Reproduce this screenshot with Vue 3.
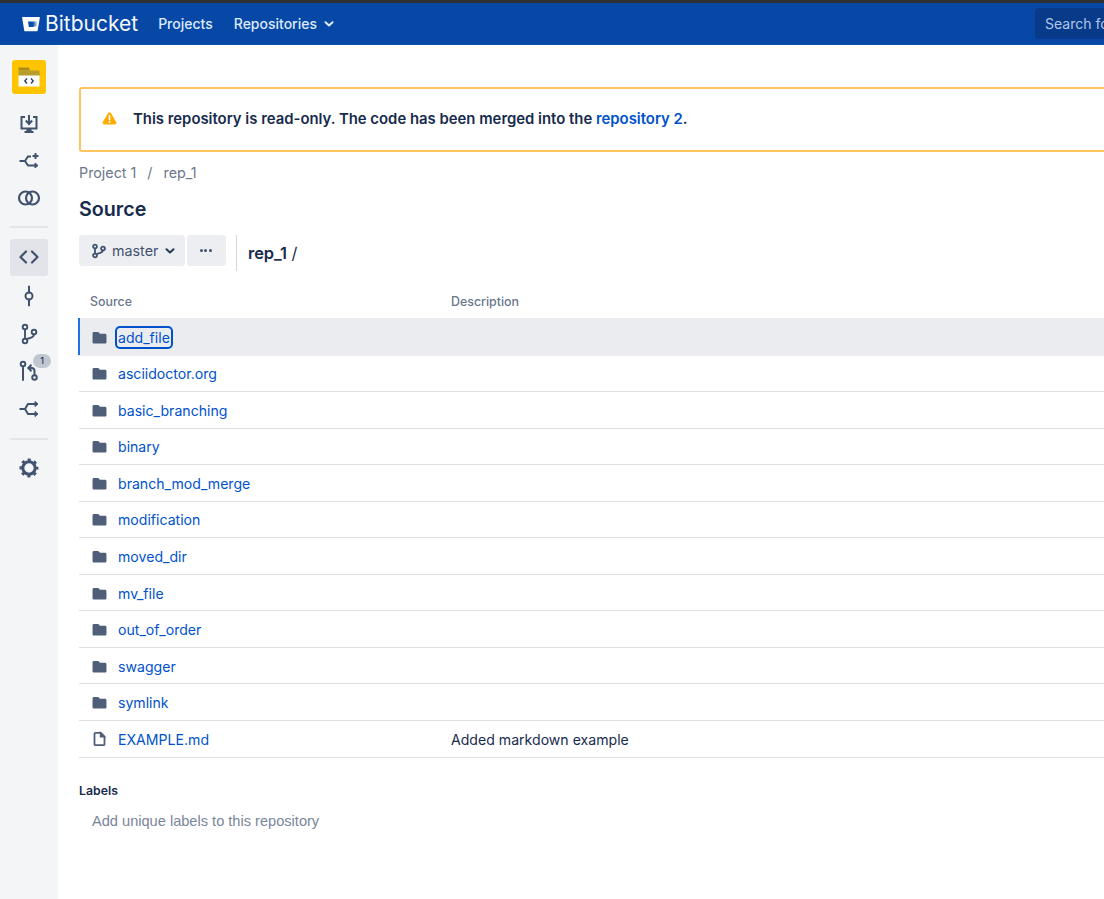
<script setup>
const folders = ['add_file','asciidoctor.org','basic_branching','binary','branch_mod_merge','modification','moved_dir','mv_file','out_of_order','swagger','symlink']
</script>

<template>
  <div class="page">
    <header class="nav">
      <svg class="logo" viewBox="0 0 18 16" width="18" height="16">
        <defs>
          <linearGradient id="bbgrad" x1="0" y1="0" x2="1" y2="0">
            <stop offset="0" stop-color="#0747a6"/>
            <stop offset="0.5" stop-color="#0f50ad"/>
            <stop offset="1" stop-color="#fff"/>
          </linearGradient>
        </defs>
        <path fill="#fff" d="M.6 1h16.800c.3 0 .6.3.5.6l-2.300 13.200c0 .3-.3.5-.6.5H3.100c-.4 0-.7-.3-.8-.6L.1 1.600C0 1.300.3 1 .6 1z"/>
        <path fill="url(#bbgrad)" d="M6 5.500h10L15.200 10.500H11.800L11.400 11H6.900z"/>
      </svg>
      <span class="brand">Bitbucket</span>
      <a class="nav-link projects">Projects</a>
      <a class="nav-link">Repositories</a>
      <svg class="nav-caret" viewBox="0 0 10 6" width="10" height="6"><path d="M1.500 1.200 5 4.500l3.500-3.300" fill="none" stroke="#deebff" stroke-width="2" stroke-linecap="round" stroke-linejoin="round"/></svg>
      <div class="spacer"></div>
      <div class="search">Search for code</div>
    </header>

    <div class="body">
      <aside class="side">
        <div class="repo-avatar">
          <svg viewBox="0 0 34 34" width="34" height="34">
            <path fill="#a98c1e" d="M6.500 7.500h10l2 3h-12z"/>
            <rect x="6.500" y="10.500" width="21" height="5.500" fill="#b89c2c"/>
            <rect x="6.500" y="15.500" width="21" height="11" fill="#fff"/>
            <path d="M15 18.500 12.800 21l2.200 2.500M19 18.500l2.200 2.500-2.200 2.500" fill="none" stroke="#253858" stroke-width="1.300"/>
          </svg>
        </div>
        <div class="side-icons">
          <div class="si"><svg viewBox="0 0 24 24" width="24" height="24"><path d="M8 5H4.500v11.500h15V5H16" fill="none" stroke="#42526e" stroke-width="2"/><path d="M12 3v8M8.800 8.500 12 12l3.200-3.500" fill="none" stroke="#42526e" stroke-width="2"/><path d="M10 16.500h4l1 3H9z" fill="#42526e"/><rect x="7.500" y="19" width="9" height="2" fill="#42526e"/></svg></div>
          <div class="si"><svg viewBox="0 0 24 24" width="24" height="24"><path d="M2.500 12H8M8 12l3-4.500h3M8 12l3 4.500h8" fill="none" stroke="#42526e" stroke-width="2"/><path d="M18 14l3 2.500-3 2.500z" fill="#42526e" stroke="#42526e"/><path d="M18.500 4v6M15.500 7h6" fill="none" stroke="#42526e" stroke-width="2"/></svg></div>
          <div class="si"><svg viewBox="0 0 24 24" width="24" height="24"><circle cx="8.500" cy="12" r="6.500" fill="none" stroke="#42526e" stroke-width="2.200"/><circle cx="15.500" cy="12" r="6.500" fill="none" stroke="#42526e" stroke-width="2.200"/></svg></div>
        </div>
        <div class="rule"></div>
        <div class="si active"><svg viewBox="0 0 24 24" width="24" height="24"><path d="M9 6.500 3.500 12 9 17.500M15 6.500l5.500 5.500-5.500 5.500" fill="none" stroke="#42526e" stroke-width="2.200" stroke-linecap="round" stroke-linejoin="round"/></svg></div>
        <div class="side-icons second">
          <div class="si"><svg viewBox="0 0 24 24" width="24" height="24"><path d="M12 2.500v6M12 15.500v6" stroke="#42526e" stroke-width="2" stroke-linecap="round"/><circle cx="12" cy="12" r="3.500" fill="none" stroke="#42526e" stroke-width="2"/></svg></div>
          <div class="si"><svg viewBox="0 0 24 24" width="24" height="24"><circle cx="8" cy="5" r="2.300" fill="none" stroke="#42526e" stroke-width="1.900"/><circle cx="8" cy="19" r="2.300" fill="none" stroke="#42526e" stroke-width="1.900"/><circle cx="17" cy="10" r="2.300" fill="none" stroke="#42526e" stroke-width="1.900"/><path d="M8 7.500v9M17 12.500c0 3-5 4-7.500 4.500" fill="none" stroke="#42526e" stroke-width="1.900"/></svg></div>
          <div class="si pr">
            <svg viewBox="0 0 24 24" width="24" height="24"><circle cx="6" cy="5" r="2.300" fill="none" stroke="#42526e" stroke-width="1.900"/><path d="M6 7.500V21" stroke="#42526e" stroke-width="2" stroke-linecap="round"/><circle cx="17.500" cy="18.500" r="2.300" fill="none" stroke="#42526e" stroke-width="1.900"/><path d="M17.500 16v-4c0-2-1-3-3-3h-2M14.500 5.800 11.300 9l3.200 3.200" fill="none" stroke="#42526e" stroke-width="2"/></svg>
            <span class="badge">1</span>
          </div>
          <div class="si"><svg viewBox="0 0 24 24" width="24" height="24"><path d="M2.500 12H8M8 12l3-5h7M8 12l3 5h7" fill="none" stroke="#42526e" stroke-width="2"/><path d="M18 4.500 21 7l-3 2.500zM18 14.500l3 2.500-3 2.500z" fill="#42526e" stroke="#42526e"/></svg></div>
        </div>
        <div class="rule second-rule"></div>
        <div class="si"><svg viewBox="0 0 24 24" width="24" height="24"><circle cx="12" cy="12" r="6.200" fill="none" stroke="#42526e" stroke-width="3"/><circle cx="12" cy="12" r="8.300" fill="none" stroke="#42526e" stroke-width="2.400" stroke-dasharray="3.100 3.418" stroke-dashoffset="1.550"/></svg></div>
      </aside>

      <main class="main">
        <div class="banner">
          <svg viewBox="0 0 16 14" width="15" height="13"><path fill="#ffab00" d="M6.500 1.200c.7-1.200 2.300-1.200 3 0l5.700 9.700c.7 1.200-.1 2.600-1.500 2.600H2.300C.9 13.500.1 12.100.8 10.900z"/><path d="M8 3.800v4.500" stroke="#fff" stroke-width="1.800" stroke-linecap="round"/><circle cx="8" cy="10.800" r="1.100" fill="#fff"/></svg>
          <span>This repository is read-only. The code has been merged into the <a class="blue">repository 2</a>.</span>
        </div>

        <nav class="crumbs"><span>Project 1</span><span class="sep">/</span><span>rep_1</span></nav>
        <h1 class="title">Source</h1>

        <div class="toolbar">
          <button class="btn branch">
            <svg viewBox="0 0 16 16" width="16" height="16"><circle cx="4" cy="3.500" r="1.900" fill="none" stroke="#42526e" stroke-width="1.800"/><circle cx="4" cy="12.500" r="1.900" fill="none" stroke="#42526e" stroke-width="1.800"/><circle cx="12" cy="5.500" r="1.900" fill="none" stroke="#42526e" stroke-width="1.800"/><path d="M4 5.300v5.400M12 7.300c0 2.500-4 3-6.500 3.700" fill="none" stroke="#42526e" stroke-width="1.800"/></svg>
            <span>master</span>
            <svg viewBox="0 0 10 6" width="10" height="6"><path d="M1.500 1.200 5 4.500l3.500-3.300" fill="none" stroke="#253858" stroke-width="2" stroke-linecap="round" stroke-linejoin="round"/></svg>
          </button>
          <button class="btn more"><i></i><i></i><i></i></button>
          <div class="divider"></div>
          <div class="path"><b>rep_1</b> /</div>
        </div>

        <div class="thead"><span class="c1">Source</span><span>Description</span></div>
        <div class="rows">
          <div v-for="(f, i) in folders" :key="f" class="row" :class="{ selected: i === 0 }">
            <svg class="ic" viewBox="0 0 16 14" width="15" height="13"><path fill="#505f79" d="M2 1h4.200c.5 0 .9.200 1.200.6L8.500 3H14c.8 0 1.500.7 1.500 1.500V12c0 .8-.7 1.500-1.500 1.500H2C1.200 13.500.5 12.800.5 12V2.500C.5 1.700 1.200 1 2 1z"/></svg>
            <a class="blue name" :class="{ focus: i === 0 }">{{ f }}</a>
          </div>
          <div class="row">
            <svg class="ic" viewBox="0 0 15 16" width="15" height="16"><path d="M3.500 1.800h5.300l3.700 3.700v7.700c0 .6-.5 1-1 1h-8c-.5 0-1-.4-1-1V2.800c0-.6.500-1 1-1z" fill="none" stroke="#505f79" stroke-width="1.800"/><path d="M8.500 1.800v4h4z" fill="#505f79" stroke="#505f79" stroke-width="1.400"/></svg>
            <a class="blue name">EXAMPLE.md</a>
            <span class="desc">Added markdown example</span>
          </div>
        </div>

        <div class="labels-title">Labels</div>
        <div class="labels-add">Add unique labels to this repository</div>
      </main>
    </div>
  </div>
</template>

<style>
html, body { margin: 0; background: #fff; }
</style>

<style scoped>
.page {
  width: 1104px; height: 899px; overflow: hidden; display: flex; flex-direction: column;
  border-top: 3px solid #2f3033; box-sizing: border-box;
  font-family: Inter, "Liberation Sans", sans-serif; font-size: 14px; color: #172b4d;
}
.nav {
  height: 42px; flex: none; background: #0747a6; display: flex; align-items: center;
  padding-left: 22px; color: #deebff; border-bottom: 1px solid #0a4fa8; box-sizing: border-box;
}
.logo { flex: none; }
.brand { font-size: 21px; color: #f4f8ff; margin-left: 5px; margin-right: 20px; }
.nav-link { font-size: 14px; font-weight: 500; }
.projects { margin-right: 21px; }
.nav-caret { margin-left: 7px; margin-top: 1px; }
.spacer { flex: 1; }
.search {
  width: 69px; height: 31px; flex: none; box-sizing: border-box; padding: 7px 0 0 10px; margin-top: -1px;
  background: #083a8a; border-radius: 4px 0 0 4px; color: #b3c6e6; white-space: nowrap; overflow: hidden; font-size: 14px;
}
.body { flex: 1; display: flex; min-height: 0; }
.side {
  width: 58px; flex: none; background: #f4f5f7; display: flex; flex-direction: column; align-items: center;
  padding-top: 15px; box-sizing: border-box;
}
.repo-avatar { width: 34px; height: 34px; background: #ffc400; border-radius: 3px; overflow: hidden; display: flex; align-items: center; justify-content: center; margin-bottom: 12px; }
.side-icons { display: flex; flex-direction: column; }
.si { width: 38px; height: 36.7px; display: flex; align-items: center; justify-content: center; border-radius: 3px; position: relative; flex: none; }
.rule { width: 38px; height: 2px; background: #e4e5e9; margin: 10px 0 11px; flex: none; }
.active { background: #e2e4e9; }
.second { margin-top: 1.500px; }
.second .si { height: 37.7px; }
.second-rule { margin: 9.500px 0 10px; }
.badge {
  position: absolute; top: 1px; right: -3px; width: 18px; height: 14px; border-radius: 7px; background: #c1c7d0;
  font-size: 9px; font-weight: 500; color: #253858; display: flex; align-items: center; justify-content: center;
}
.main { flex: 1; min-width: 0; padding: 42px 0 0 21px; }
.banner {
  height: 65px; box-sizing: border-box; margin-right: -6px; border: 2px solid #ffc55c; border-radius: 3px;
  display: flex; align-items: center; gap: 16px; padding-left: 21px; padding-bottom: 2px; font-weight: 600; font-size: 14.88px;
}
.blue { color: #0052cc; }
.crumbs { display: flex; gap: 10px; color: #6b778c; font-size: 14.3px; margin-top: 12px; height: 17px; }
.sep { padding: 0 1px; }
.title { font-size: 19.7px; font-weight: 600; line-height: 24px; margin: 16px 0 0; color: #172b4d; }
.toolbar { display: flex; align-items: flex-start; margin-top: 14px; height: 36px; }
.btn { border: 0; background: #edeef1; border-radius: 3px; height: 31px; display: flex; align-items: center; font: inherit; color: #42526e; padding: 0; }
.branch { width: 106px; padding-left: 12px; gap: 5px; box-sizing: border-box; font-size: 14.3px; }
.branch span { margin-right: 2px; }
.more { width: 39px; margin-left: 2px; justify-content: center; gap: 1.500px; padding-right: 2px; box-sizing: border-box; }
.more i { width: 3px; height: 3px; border-radius: 50%; background: #42526e; }
.divider { width: 1px; height: 36px; background: #d5d7dc; margin: 0 11px 0 10px; }
.path { font-size: 16.4px; line-height: 36px; }
.path b { font-weight: 600; }
.thead { display: flex; height: 31px; margin-top: 15px; margin-bottom: 1.500px; font-size: 12.400px; font-weight: 500; color: #6b778c; align-items: center; padding-left: 11px; box-sizing: border-box; }
.c1 { width: 361px; }
.rows { display: flex; flex-direction: column; }
.row { height: 36.55px; flex: none; box-sizing: border-box; display: flex; align-items: center; border-bottom: 1px solid #dfe1e6; padding: 1px 0 0 13px; position: relative; font-size: 14.1px; }
.selected { height: 38px; margin: -1px 0 0 -1px; padding: 2px 0 0 14px; background: #ebecf0; box-shadow: inset 2px 0 0 #1f6fe8; border-bottom-color: transparent; }
.ic { flex: none; }
.name { margin-left: 11px; white-space: nowrap; }
.focus { box-shadow: 0 0 0 2px #0052cc; border-radius: 3px; padding: 1px; margin-left: 10px; line-height: 17px; }
.desc { position: absolute; left: 372px; color: #172b4d; }
.labels-title { font-size: 12.3px; font-weight: 600; margin-top: 25px; line-height: 16px; color: #172b4d; }
.labels-add { font-family: "Liberation Sans", Arial, sans-serif; font-size: 14.6px; color: #7a869a; margin: 14.500px 0 0 13px; line-height: 17px; }
</style>
